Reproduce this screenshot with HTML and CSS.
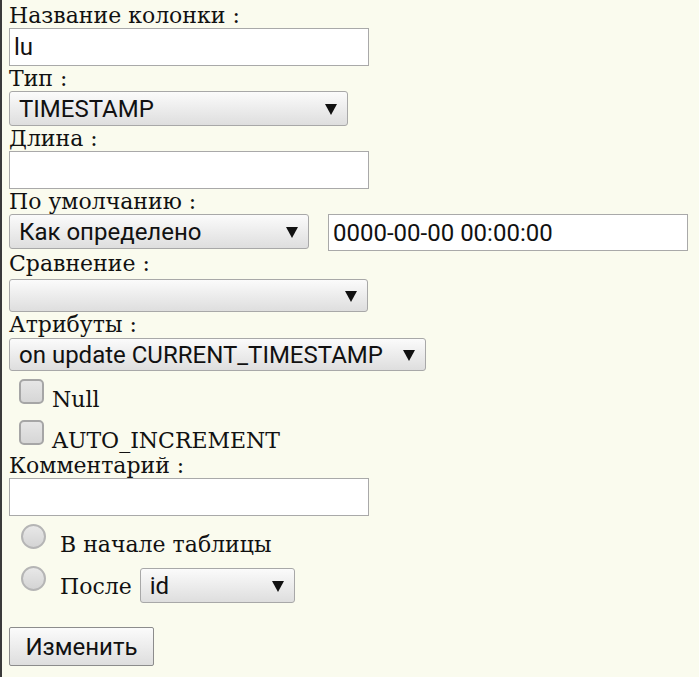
FILE: index.html
```html
<!DOCTYPE html>
<html lang="ru">
<head>
<meta charset="utf-8">
<title>Изменить колонку</title>
<link rel="stylesheet" href="styles.css">
</head>
<body>
<form class="form">
  <div class="label">Название колонки :</div>
  <input class="text" type="text" value="lu">
  <div class="label">Тип :</div>
  <span class="sel w-type"><span class="sel-text">TIMESTAMP</span></span>
  <div class="label">Длина :</div>
  <input class="text" type="text" value="">
  <div class="label">По умолчанию :</div>
  <div class="row">
    <span class="sel w-default"><span class="sel-text">Как определено</span></span>
    <input class="text text-right" type="text" value="0000-00-00 00:00:00">
  </div>
  <div class="label label-coll">Сравнение :</div>
  <span class="sel w-coll"><span class="sel-text"></span></span>
  <div class="label label-attr">Атрибуты :</div>
  <span class="sel w-attr"><span class="sel-text">on update CURRENT_TIMESTAMP</span></span>
  <label class="check"><span class="box"></span><span class="check-text">Null</span></label>
  <label class="check"><span class="box"></span><span class="check-text">AUTO_INCREMENT</span></label>
  <div class="label">Комментарий :</div>
  <input class="text" type="text" value="">
  <label class="radio"><span class="dot"></span><span class="radio-text">В начале таблицы</span></label>
  <div class="radio radio-after"><span class="dot"></span><span class="radio-text">После</span><span class="sel w-id"><span class="sel-text">id</span></span></div>
  <button class="btn" type="button">Изменить</button>
</form>
</body>
</html>
```
FILE: styles.css
```css
html, body {
  margin: 0;
  padding: 0;
  background: #fafbee;
  height: 100%;
}
body {
  border-left: 2px solid #3a3a3a;
  box-sizing: border-box;
  padding: 0 0 0 7px;
}
.form {
  display: flex;
  flex-direction: column;
  align-items: flex-start;
  padding-top: 3px;
}
.label {
  font-family: "DejaVu Serif", serif;
  font-size: 22px;
  line-height: 25px;
  height: 25px;
  color: #111;
}
.label-coll { height: 28px; }
.label-attr { height: 26px; }
.text {
  box-sizing: border-box;
  width: 360px;
  height: 38px;
  margin: 0;
  border: 1px solid #a9a9a9;
  background: #fff;
  font-family: Roboto, "Open Sans", sans-serif;
  font-size: 24px;
  padding: 0 4px;
  color: #111;
}
.row {
  display: flex;
  align-items: flex-start;
  gap: 19px;
  height: 37px;
}
.text-right {
  height: 37px;
}
.sel {
  position: relative;
  box-sizing: border-box;
  display: flex;
  align-items: center;
  height: 35px;
  border: 1px solid #a8a8a8;
  border-radius: 3px;
  background: linear-gradient(#fbfbfb, #dedede);
  font-family: Roboto, "Open Sans", sans-serif;
  font-size: 24px;
  color: #111;
  padding: 0 30px 0 9px;
  white-space: nowrap;
}
.sel::after {
  content: "";
  position: absolute;
  right: 10px;
  top: 50%;
  margin-top: -5px;
  border-left: 6px solid transparent;
  border-right: 6px solid transparent;
  border-top: 11px solid #111;
}
.w-type { width: 339px; }
.w-default { width: 300px; }
.w-coll { width: 359px; height: 33px; }
.w-attr { width: 417px; height: 33px; }
.w-id { width: 155px; }
.check {
  display: flex;
  align-items: flex-start;
  margin-left: 10px;
  height: 41px;
}
.box {
  box-sizing: border-box;
  width: 25px;
  height: 25px;
  border: 2px solid #a6a6a6;
  border-radius: 5px;
  background: linear-gradient(#e6e6e6, #d6d6d6);
  margin-top: 8px;
}
.check-text, .radio-text {
  font-family: "DejaVu Serif", serif;
  font-size: 22px;
  line-height: 25px;
  margin-top: 16px;
  margin-left: 8px;
  color: #111;
}
.radio {
  display: flex;
  align-items: flex-start;
  margin-left: 12px;
  height: 42px;
}
.radio-after { height: 45px; }
.dot {
  box-sizing: border-box;
  width: 25px;
  height: 25px;
  border: 2px solid #b5b5b5;
  border-radius: 50%;
  background: linear-gradient(#e8e8e8, #d4d4d4);
  margin-top: 8px;
}
.radio-text { margin-left: 14px; margin-right: 8px; }
.radio-after .sel { margin-top: 10px; }
.btn {
  margin-top: 24px;
  box-sizing: border-box;
  width: 145px;
  height: 39px;
  border: 1px solid #8c8c8c;
  border-radius: 2px;
  background: linear-gradient(#fbfbfb, #dedede);
  font-family: Roboto, "Open Sans", sans-serif;
  font-size: 24px;
  color: #111;
  padding: 0;
}
```
